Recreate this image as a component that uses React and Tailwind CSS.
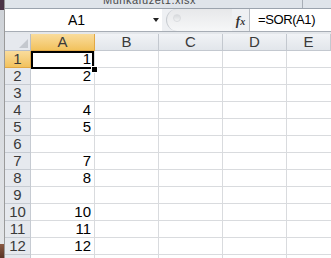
import React from "react";

const vals = ["1", "2", "", "4", "5", "", "7", "8", "", "10", "11", "12", ""];
const cols = ["A", "B", "C", "D", "E"];

export default function App() {
  return (
    <div className="w-[331px] h-[258px] overflow-hidden flex bg-white font-['Liberation_Sans',Arial,sans-serif] text-[#333]">
      {/* background window strip */}
      <div className="w-[5px] shrink-0 flex flex-col border-r border-[#9a9a9a]">
        <div className="h-[10px] bg-[#4b3447]" />
        <div className="flex-1 bg-gradient-to-b from-[#cfd3d8] to-[#e3e5e8]" />
        <div className="h-[14px] bg-gradient-to-b from-[#8a5a44] to-[#5a3426]" />
      </div>

      <div className="flex-1 min-w-0 flex flex-col">
        {/* title strip */}
        <div className="h-[9px] shrink-0 bg-[#dfe4ea] border-b border-[#9ba3ad] flex relative overflow-hidden">
          <div className="w-[98px]" />
          <div className="text-[11px] leading-[11px] -mt-[5px] text-[#4a4a4a] tracking-[0.5px]">Munkafüzet1.xlsx</div>
          <div className="absolute left-[297px] top-0 h-full w-px bg-[#a8aeb6]" />
        </div>

        {/* formula bar */}
        <div className="h-[23px] shrink-0 flex bg-[#eef0f3] border-b border-[#a7adb5]">
          <div className="w-[157px] bg-white flex items-center relative">
            <span className="absolute left-[63px] top-[3px] text-[14px] leading-[16px] text-black">A1</span>
            <svg className="absolute left-[148px] top-[9px]" width="6" height="4" viewBox="0 0 6 4">
              <path d="M0 0H6L3 4Z" fill="#222" />
            </svg>
          </div>
          <div className="w-[4px]" />
          <div className="w-[66px] rounded-l-full bg-gradient-to-b from-[#e7e8ea] to-[#f6f7f8] border-l border-[#c7cbd0] relative">
            <div className="absolute left-[6px] top-[5px] w-[8px] h-[8px] rounded-full bg-gradient-to-b from-[#d7d9dc] to-[#f2f3f4] border border-[#dadcdf]" />
          </div>
          <div className="w-[17px] flex items-center justify-center">
            <span className="font-['Liberation_Serif',serif] italic font-bold text-[13px] leading-none text-[#333]">f<span className="text-[10px]">x</span></span>
          </div>
          <div className="w-px bg-[#b7bcc3]" />
          <div className="flex-1 bg-white flex items-center pl-[8px]">
            <span className="text-[13px] tracking-[-0.4px] text-black">=SOR(A1)</span>
          </div>
        </div>
        <div className="h-[2px] shrink-0 bg-[#e4e7eb]" />

        {/* grid */}
        <div className="grid grid-cols-[26px_64px_64px_64px_64px_1fr] auto-rows-[17px] relative">
          {/* corner */}
          <div className="bg-[#e6e9ee] border-r border-b border-[#b8bec7] relative">
            <svg className="absolute right-[2px] bottom-[2px]" width="9" height="9" viewBox="0 0 9 9">
              <path d="M9 0V9H0Z" fill="#c4c8ce" />
            </svg>
          </div>
          {cols.map((c, i) => (
            <div
              key={c}
              className={
                i === 0
                  ? "bg-gradient-to-b from-[#f9dc9c] to-[#f2c25c] border-r border-b border-[#e2a844] flex items-center justify-center text-[15px] text-[#3a3a3a]"
                  : "bg-gradient-to-b from-[#f1f3f6] to-[#e2e6eb] border-r border-b border-[#c3c8cf] flex items-center justify-center text-[15px] text-[#3a3a3a]"
              }
            >
              {c}
            </div>
          ))}
          {vals.map((v, r) => (
            <React.Fragment key={r}>
              <div
                className={
                  r === 0
                    ? "bg-gradient-to-b from-[#f9dc9c] to-[#f2c25c] border-r border-b border-[#e2a844] flex items-center justify-center text-[15px] text-[#3a3a3a]"
                    : "bg-[#e6e9ee] border-r border-b border-[#c6cbd2] flex items-center justify-center text-[15px] text-[#3a3a3a]"
                }
              >
                {r < 12 ? r + 1 : ""}
              </div>
              <div className="border-r border-b border-[#d9dbde] flex items-center justify-end pr-[3px] text-[15px] text-black">
                {v}
              </div>
              <div className="border-r border-b border-[#d9dbde]" />
              <div className="border-r border-b border-[#d9dbde]" />
              <div className="border-r border-b border-[#d9dbde]" />
              <div className="border-b border-[#d9dbde]" />
            </React.Fragment>
          ))}
          {/* active cell */}
          <div className="absolute left-[26px] top-[17px] w-[63px] h-[18px] border-2 border-black pointer-events-none" />
          <div className="absolute left-[87px] top-[33px] w-[5px] h-[5px] bg-black outline outline-1 outline-white" />
        </div>
      </div>
    </div>
  );
}
